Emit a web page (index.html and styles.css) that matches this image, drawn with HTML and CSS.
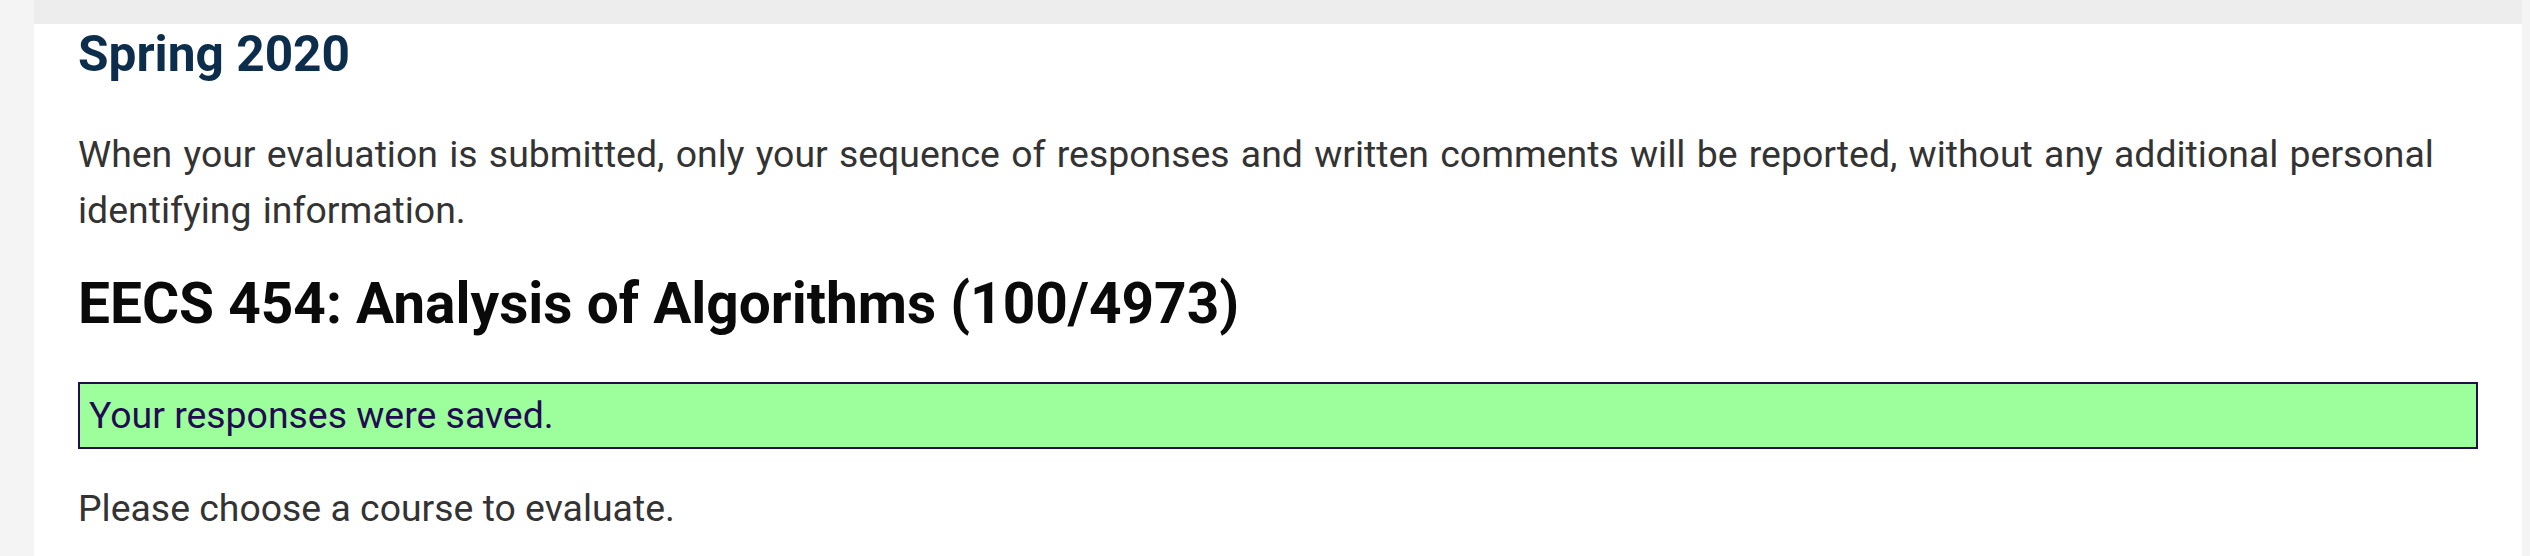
FILE: index.html
```html
<!DOCTYPE html>
<html lang="en">
<head>
<meta charset="utf-8">
<title>Course Evaluations</title>
<link rel="stylesheet" href="styles.css">
</head>
<body>
<div class="page">
  <div class="topbar"></div>
  <main class="content">
    <h1 class="term">Spring 2020</h1>
    <p class="note">When your evaluation is submitted, only your sequence of responses and written comments will be reported, without any additional personal identifying information.</p>
    <h2 class="course">EECS 454: Analysis of Algorithms (100/4973)</h2>
    <div class="flash">Your responses were saved.</div>
    <p class="prompt">Please choose a course to evaluate.</p>
  </main>
</div>
</body>
</html>
```
FILE: styles.css
```css
html, body {
  margin: 0;
  padding: 0;
}
body {
  background: #f4f4f4;
  font-family: Roboto, "Open Sans", sans-serif;
  color: #333333;
  height: 556px;
  overflow: hidden;
}
.page {
  margin-left: 34px;
  width: 2488px;
  min-height: 556px;
  background: #ffffff;
}
.topbar {
  height: 24px;
  background: #ededed;
}
.content {
  padding: 0 44px;
}
.term {
  margin: 0;
  font-size: 49.6px;
  line-height: 60px;
  font-weight: 700;
  color: #0c2d4c;
}
.note {
  margin: 42px 0 0;
  font-size: 37.4px;
  line-height: 56px;
  word-spacing: 2px;
}
.course {
  margin: 31.5px 0 0;
  font-size: 56.8px;
  line-height: 68px;
  font-weight: 700;
  color: #0a0a0a;
}
.flash {
  margin-top: 44.8px;
  border: 2px solid #260b4d;
  background: #9dff9b;
  color: #230a52;
  font-size: 37.4px;
  line-height: 51px;
  padding: 6px 9px;
}
.prompt {
  margin: 30.5px 0 0;
  font-size: 37.4px;
  line-height: 56px;
}
```
